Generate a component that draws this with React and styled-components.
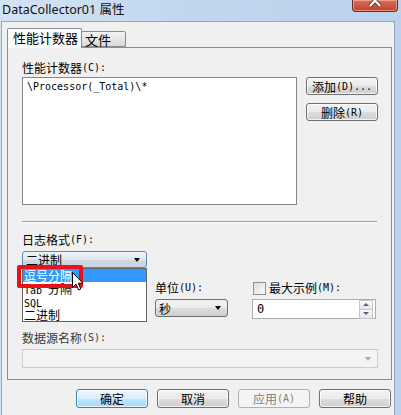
import React from 'react';
import styled, { createGlobalStyle } from 'styled-components';

const CJK = `"Noto Sans CJK SC", "Noto Sans", sans-serif`;
const MONO = `"DejaVu Sans Mono", "Noto Sans CJK SC", monospace`;

const Global = createGlobalStyle`
  html, body { margin: 0; padding: 0; background: #c4d8ee; overflow: hidden; }
  #root { width: 401px; height: 415px; }
`;

const Window = styled.div`
  width: 401px;
  height: 415px;
  display: flex;
  flex-direction: column;
  background: linear-gradient(90deg, #d3e3f4 0%, #c2d7ee 45%, #bcd2eb 100%);
  font-family: ${CJK};
  font-size: 12px;
  color: #000;
`;

const TitleBar = styled.div`
  height: 21px;
  flex: none;
  display: flex;
  justify-content: space-between;
  align-items: flex-start;
  padding: 0 3px 0 2px;
`;

const Title = styled.div`
  font-family: "Noto Sans", "Noto Sans CJK SC", sans-serif;
  font-size: 12.5px;
  line-height: 17px;
  padding-top: 1px;
  color: #111;
  white-space: nowrap;
`;

const CloseBtn = styled.div`
  width: 44px;
  height: 11px;
  border: 1px solid #6b2a22;
  border-top: none;
  border-radius: 0 0 4px 4px;
  background: linear-gradient(#d9705c, #c2422b);
  box-shadow: inset 0 0 0 1px rgba(255, 190, 170, 0.6);
  display: flex;
  justify-content: center;
  overflow: hidden;
`;

const Client = styled.div`
  flex: none;
  margin: 0 6px 5px 1px;
  height: 387px;
  border: 1px solid #95a6bd;
  background: #f0f0f0;
  padding: 6px 1px 0 5px;
  display: flex;
  flex-direction: column;
`;

const TabStrip = styled.div`
  display: flex;
  align-items: flex-end;
  height: 19px;
`;

const Tab = styled.div`
  position: relative;
  z-index: ${(p) => (p.$active ? 2 : 1)};
  width: ${(p) => p.$w}px;
  height: ${(p) => (p.$active ? 20 : 16)}px;
  margin-bottom: ${(p) => (p.$active ? -1 : 0)}px;
  margin-left: ${(p) => (p.$active ? 0 : -1)}px;
  box-sizing: border-box;
  border: 1px solid #898c95;
  border-bottom: ${(p) => (p.$active ? 'none' : '1px solid #898c95')};
  border-radius: 2px 2px 0 0;
  background: ${(p) =>
    p.$active ? '#fcfcfc' : 'linear-gradient(#f3f3f3, #e6e6e6 50%, #d9d9d9)'};
  font-size: 13px;
  line-height: ${(p) => (p.$active ? 17 : 15)}px;
  padding-left: ${(p) => (p.$active ? 5 : 3)}px;
  white-space: nowrap;
`;

const Panel = styled.div`
  position: relative;
  width: 385px;
  height: 333px;
  box-sizing: border-box;
  border: 1px solid #898c95;
  background: #f0f0f0;
  padding: 13px 12px 0 14px;
  display: flex;
  flex-direction: column;
`;

const Label = styled.div`
  font-size: 12px;
  line-height: 14px;
  height: 14px;
  white-space: nowrap;
  margin-top: ${(p) => p.$mt || 0}px;
  color: ${(p) => (p.$disabled ? '#3a3a3a' : '#000')};
  display: flex;
  align-items: center;
`;

const A = styled.span`
  font-family: ${MONO};
  font-size: 10px;
  letter-spacing: 0;
`;

const ListRow = styled.div`
  display: flex;
  margin-top: 2px;
`;

const ListBox = styled.div`
  width: 275px;
  height: 128px;
  box-sizing: border-box;
  border: 1px solid #828790;
  background: #fff;
  padding: 2px 4px;
  font-family: ${MONO};
  font-size: 10px;
  line-height: 14px;
`;

const SideButtons = styled.div`
  margin-left: auto;
  margin-right: 1px;
  display: flex;
  flex-direction: column;
  gap: 8px;
`;

const Button = styled.div`
  width: 72px;
  height: ${(p) => p.$h || 18}px;
  box-sizing: border-box;
  border: 1px solid ${(p) => (p.$default ? '#3c7fb1' : p.$disabled ? '#adb2b5' : '#707070')};
  border-radius: 3px;
  background: ${(p) =>
    p.$default
      ? 'linear-gradient(#eaf6fd, #d9f0fc 50%, #bee6fd 50%, #a7d9f5)'
      : p.$disabled
      ? '#f4f4f4'
      : 'linear-gradient(#f2f2f2, #ebebeb 50%, #dddddd 50%, #cfcfcf)'};
  box-shadow: inset 0 0 0 1px ${(p) => (p.$disabled ? 'transparent' : 'rgba(255,255,255,0.75)')};
  color: ${(p) => (p.$disabled ? '#838383' : '#000')};
  font-size: 12px;
  display: flex;
  align-items: center;
  justify-content: center;
  white-space: nowrap;
`;

const Separator = styled.div`
  margin-top: 16px;
  width: 355px;
  height: 0;
  border-top: 1px solid #a0a0a0;
  border-bottom: 1px solid #ffffff;
`;

const ComboWrap = styled.div`
  position: relative;
  width: ${(p) => p.$w}px;
  margin-top: ${(p) => p.$mt || 0}px;
`;

const Combo = styled.div`
  height: ${(p) => p.$h || 18}px;
  box-sizing: border-box;
  border: 1px solid ${(p) => (p.$open ? '#5a8bb6' : p.$disabled ? '#c9cbd0' : '#707070')};
  border-radius: ${(p) => (p.$disabled ? 0 : 3)}px;
  background: ${(p) =>
    p.$open
      ? 'linear-gradient(#eef3f8, #e0e7ef 50%, #cfd9e4 50%, #c7d2de)'
      : p.$disabled
      ? '#f4f4f4'
      : 'linear-gradient(#f2f2f2, #ebebeb 50%, #dddddd 50%, #cfcfcf)'};
  display: flex;
  align-items: center;
  padding: 0 6px 0 3px;
  font-size: 12px;
`;

const Arrow = styled.span`
  margin-left: auto;
  width: 0;
  height: 0;
  border-left: 3.5px solid transparent;
  border-right: 3.5px solid transparent;
  border-top: 4px solid ${(p) => (p.$grey ? '#a9a9a9' : '#000')};
`;

const DropList = styled.div`
  position: absolute;
  z-index: 5;
  top: 100%;
  left: 0;
  width: 125px;
  box-sizing: border-box;
  border: 1px solid #646464;
  background: #fff;
  display: flex;
  flex-direction: column;
`;

const DropItem = styled.div`
  height: 13px;
  line-height: 13px;
  padding-left: 1px;
  font-size: 12px;
  background: ${(p) => (p.$sel ? '#3399ff' : 'transparent')};
  color: ${(p) => (p.$sel ? '#fff' : '#000')};
  white-space: nowrap;
`;

const RedMark = styled.div`
  position: absolute;
  z-index: 6;
  left: -5px;
  top: 14px;
  width: 66px;
  height: 23px;
  box-sizing: border-box;
  border: 4px solid #e8121c;
  border-radius: 2px;
`;

const Cursor = styled.svg`
  position: absolute;
  z-index: 7;
  left: 50px;
  top: 21px;
`;

const FieldRow = styled.div`
  display: flex;
  margin-top: 13px;
`;

const Field = styled.div`
  width: ${(p) => p.$w}px;
  margin-left: ${(p) => p.$ml || 0}px;
  display: flex;
  flex-direction: column;
  gap: 4px;
`;

const Check = styled.span`
  width: 11px;
  height: 11px;
  border: 1px solid #8e8f8f;
  background: linear-gradient(135deg, #dcdcdc, #fbfbfb);
  margin: 0 3px 0 1px;
  flex: none;
`;

const Spin = styled.div`
  height: 20px;
  box-sizing: border-box;
  border: 1px solid #abadb3;
  background: #fff;
  display: flex;
  align-items: center;
  padding: 0 2px 0 4px;
  font-size: 12px;
  font-family: ${MONO};
`;

const SpinBtns = styled.div`
  margin-left: auto;
  display: flex;
  flex-direction: column;
  width: 14px;
`;

const SpinBtn = styled.div`
  height: 8px;
  border: 1px solid #c8c8c8;
  margin-top: ${(p) => (p.$down ? -1 : 0)}px;
  background: linear-gradient(#fafafa, #e6e6e6);
  display: flex;
  align-items: center;
  justify-content: center;
  &::after {
    content: '';
    width: 0;
    height: 0;
    border-left: 3px solid transparent;
    border-right: 3px solid transparent;
    ${(p) => (p.$down ? 'border-top: 3px solid #4d6185;' : 'border-bottom: 3px solid #4d6185;')}
  }
`;

const ButtonRow = styled.div`
  display: flex;
  justify-content: flex-end;
  gap: 9px;
  margin-top: 9px;
  padding-right: 2px;
`;

export default function App() {
  return (
    <>
      <Global />
      <Window>
        <TitleBar>
          <Title>DataCollector01 属性</Title>
          <CloseBtn>
            <svg width="14" height="8" viewBox="0 0 14 8">
              <path d="M2 -5 L12 6 M12 -5 L2 6" stroke="#5a1a12" strokeWidth="4" />
              <path d="M2 -5 L12 6 M12 -5 L2 6" stroke="#fff" strokeWidth="2.4" />
            </svg>
          </CloseBtn>
        </TitleBar>
        <Client>
          <TabStrip>
            <Tab $active $w={75}>性能计数器</Tab>
            <Tab $w={45}>文件</Tab>
          </TabStrip>
          <Panel>
            <Label>性能计数器<A>(C):</A></Label>
            <ListRow>
              <ListBox>\Processor(_Total)\*</ListBox>
              <SideButtons>
                <Button>添加<A>(D)...</A></Button>
                <Button>删除<A>(R)</A></Button>
              </SideButtons>
            </ListRow>
            <Separator />
            <Label $mt={10}>日志格式<A>(F):</A></Label>
            <ComboWrap $w={125} $mt={4}>
              <Combo $open $h={17}>二进制<Arrow /></Combo>
              <DropList>
                <DropItem $sel>逗号分隔</DropItem>
                <DropItem><A>Tab </A>分隔</DropItem>
                <DropItem><A>SQL</A></DropItem>
                <DropItem>二进制</DropItem>
              </DropList>
              <RedMark />
              <Cursor width="12" height="19" viewBox="0 0 12 19">
                <path d="M0.5 0.5 L0.5 15.5 L4 12 L6.5 18 L8.8 17 L6.3 11.2 L11 11.2 Z" fill="#fff" stroke="#000" strokeWidth="1" />
              </Cursor>
            </ComboWrap>
            <FieldRow>
              <Field $w={125} />
              <Field $w={73} $ml={8}>
                <Label>单位<A>(U):</A></Label>
                <Combo>秒<Arrow /></Combo>
              </Field>
              <Field $w={124} $ml={24}>
                <Label><Check />最大示例<A>(M):</A></Label>
                <Spin>
                  0
                  <SpinBtns>
                    <SpinBtn />
                    <SpinBtn $down />
                  </SpinBtns>
                </Spin>
              </Field>
            </FieldRow>
            <Label $mt={12} $disabled>数据源名称<A>(S):</A></Label>
            <ComboWrap $w={356} $mt={4}>
              <Combo $disabled $h={19}><Arrow $grey /></Combo>
            </ComboWrap>
          </Panel>
          <ButtonRow>
            <Button $default $h={19}>确定</Button>
            <Button $h={19}>取消</Button>
            <Button $disabled $h={19}>应用<A>(A)</A></Button>
            <Button $h={19}>帮助</Button>
          </ButtonRow>
        </Client>
      </Window>
    </>
  );
}
